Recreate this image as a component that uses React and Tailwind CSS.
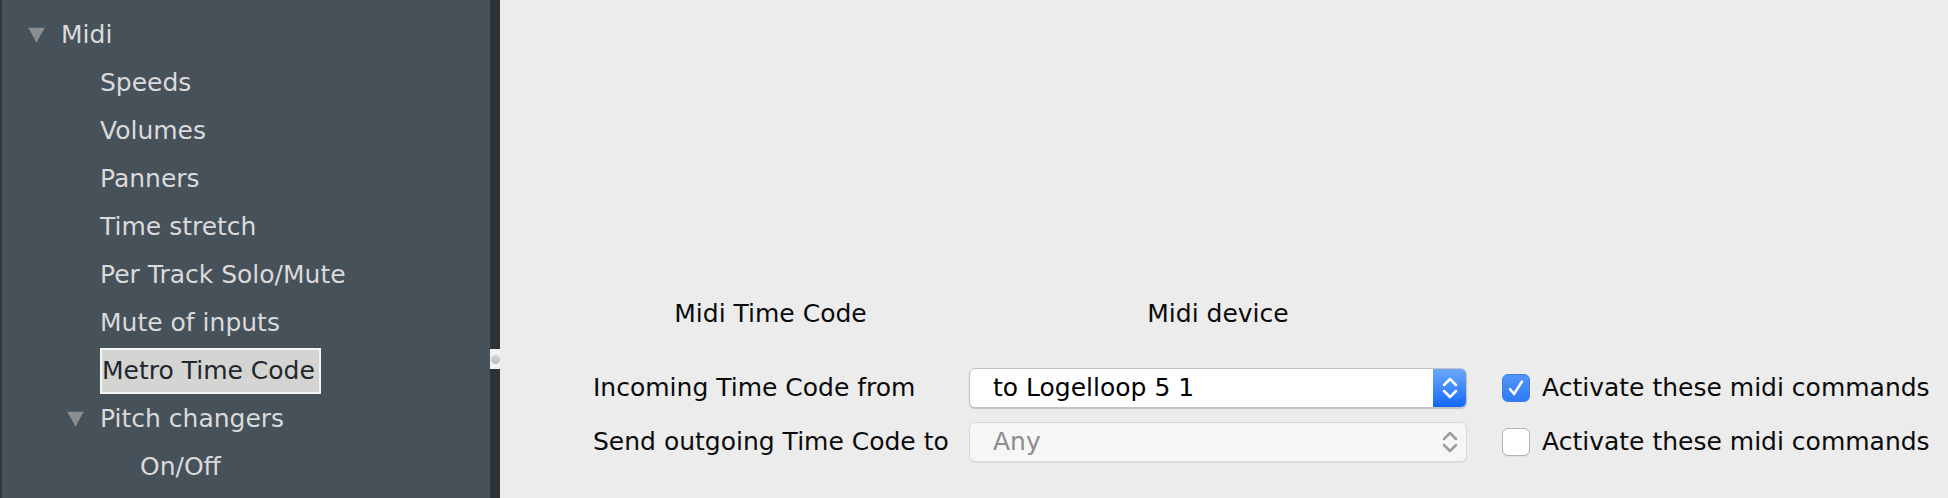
import React from "react";

const FONT = { fontFamily: '"DejaVu Sans", "Liberation Sans", sans-serif' };

const tree = [
  { label: "Midi", level: 0, open: true },
  { label: "Speeds", level: 1 },
  { label: "Volumes", level: 1 },
  { label: "Panners", level: 1 },
  { label: "Time stretch", level: 1 },
  { label: "Per Track Solo/Mute", level: 1 },
  { label: "Mute of inputs", level: 1 },
  { label: "Metro Time Code", level: 1, selected: true },
  { label: "Pitch changers", level: 1, open: true },
  { label: "On/Off", level: 2 },
];

const indent = ["pl-[59px]", "pl-[98px]", "pl-[138px]"];

// little grey disclosure triangle
const Triangle = () => (
  <svg width="17" height="15" viewBox="0 0 17 15" className="absolute left-[-33px] top-1/2 -translate-y-1/2">
    <polygon points="0,0 17,0 8.5,15" fill="#8b8d8f" />
  </svg>
);

const Chevrons = ({ color }) => (
  <svg width="18" height="30" viewBox="0 0 18 30">
    <path d="M3 12 L9 6 L15 12" fill="none" stroke={color} strokeWidth="2.5" strokeLinecap="round" strokeLinejoin="round" />
    <path d="M3 18 L9 24 L15 18" fill="none" stroke={color} strokeWidth="2.5" strokeLinecap="round" strokeLinejoin="round" />
  </svg>
);

const Checkbox = ({ checked }) =>
  checked ? (
    <div className="w-[28px] h-[28px] rounded-[6px] bg-gradient-to-b from-[#5394f8] to-[#2f7bf5] border border-[#3a7fe8] flex items-center justify-center">
      <svg width="20" height="20" viewBox="0 0 20 20">
        <path d="M4 11 L8 16 L16 3.5" fill="none" stroke="#ffffff" strokeWidth="2.4" strokeLinecap="round" strokeLinejoin="round" />
      </svg>
    </div>
  ) : (
    <div className="w-[28px] h-[28px] rounded-[6px] bg-white border border-[#b4b4b4] shadow-[0_1px_0_rgba(0,0,0,0.05)]" />
  );

const TimeCodeRow = ({ label, value, active }) => (
  <div className="grid grid-cols-[376px_498px_1fr] items-center h-[40px]">
    <span>{label}</span>
    {active ? (
      <div className="h-[40px] flex rounded-[6px] bg-white border border-[#c3c3c3] shadow-[0_1px_1px_rgba(0,0,0,0.18)] overflow-hidden">
        <span className="flex-1 flex items-center pl-[23px] text-black">{value}</span>
        <div className="w-[33px] bg-gradient-to-b from-[#6ba7fb] to-[#0f67f7] flex items-center justify-center">
          <Chevrons color="#ffffff" />
        </div>
      </div>
    ) : (
      <div className="h-[40px] flex rounded-[6px] bg-[#f6f6f6] border border-[#dadada] shadow-[0_1px_1px_rgba(0,0,0,0.06)]">
        <span className="flex-1 flex items-center pl-[23px] text-[#8d8d8d]">{value}</span>
        <div className="w-[33px] flex items-center justify-center">
          <Chevrons color="#9c9c9c" />
        </div>
      </div>
    )}
    <label className="flex items-center gap-[12px] pl-[35px]">
      <Checkbox checked={active} />
      <span>Activate these midi commands</span>
    </label>
  </div>
);

export default function App() {
  return (
    <div className="flex w-[1948px] h-[498px] overflow-hidden text-[25px]" style={FONT}>
      {/* preferences tree */}
      <aside className="w-[490px] bg-[#47515a] border-l-2 border-[#323a40] pt-[11px]">
        {tree.map((item) => (
          <div key={item.label} className={`h-[48px] flex items-center ${indent[item.level]}`}>
            <div className="relative">
              {item.open && <Triangle />}
              {item.selected ? (
                <span className="block h-[46px] leading-[42px] pr-[4px] bg-[#d4d4d2] border-2 border-[#f3f3f3] text-[#20272d]">
                  {item.label}
                </span>
              ) : (
                <span className="block leading-[30px] text-[#dadada]">{item.label}</span>
              )}
            </div>
          </div>
        ))}
      </aside>

      {/* splitter */}
      <div className="w-[10px] bg-[#2c3338] flex flex-col">
        <div className="h-[349px]" />
        <div className="h-[20px] bg-[#f1f1f1] flex items-center justify-center">
          <div className="w-[9px] h-[9px] rounded-full bg-gradient-to-b from-[#d6d6d6] to-[#b9b9b9]" />
        </div>
      </div>

      {/* settings */}
      <main className="flex-1 bg-[#ececec] pl-[93px] pt-[299px] text-[#0b0b0b]">
        <div className="grid grid-cols-[376px_498px_1fr] h-[30px] leading-[30px]">
          <span className="w-[355px] text-center">Midi Time Code</span>
          <span className="text-center">Midi device</span>
        </div>
        <div className="mt-[39px] flex flex-col gap-[14px]">
          <TimeCodeRow label="Incoming Time Code from" value="to Logelloop 5 1" active />
          <TimeCodeRow label="Send outgoing Time Code to" value="Any" />
        </div>
      </main>
    </div>
  );
}
